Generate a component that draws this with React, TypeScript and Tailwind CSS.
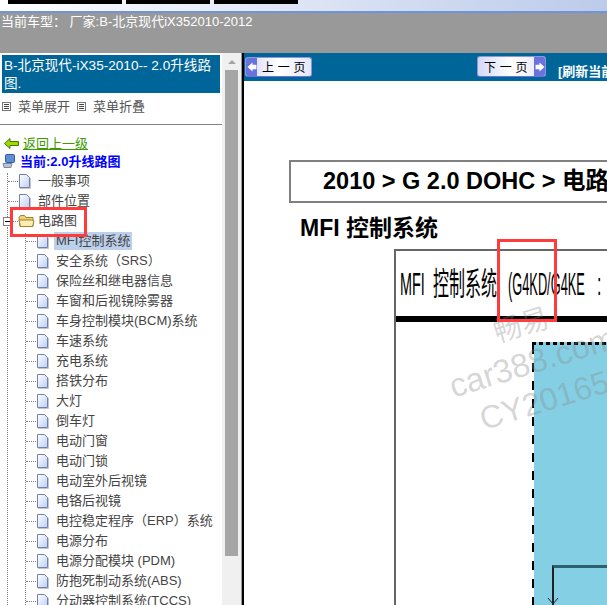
const sans = 'font-["Liberation_Sans","Noto_Sans_CJK_SC",sans-serif]';

const items = [
  'MFI控制系统', '安全系统（SRS）', '保险丝和继电器信息', '车窗和后视镜除雾器', '车身控制模块(BCM)系统',
  '车速系统', '充电系统', '搭铁分布', '大灯', '倒车灯', '电动门窗', '电动门锁', '电动室外后视镜', '电铬后视镜',
  '电控稳定程序（ERP）系统', '电源分布', '电源分配模块 (PDM)', '防抱死制动系统(ABS)', '分动器控制系统(TCCS)',
];

function PageIcon() {
  return (
    <svg width="13" height="16" viewBox="0 0 13 16" className="shrink-0">
      <defs>
        <linearGradient id="pg" x1="0" y1="0" x2="1" y2="1">
          <stop offset="0" stopColor="#ffffff" />
          <stop offset="1" stopColor="#bccff4" />
        </linearGradient>
      </defs>
      <path d="M1.5 1.5H8.5L11.5 4.5V14.5H1.5Z" fill="url(#pg)" stroke="#7480a8" />
      <path d="M2 15.5H12.5V5" fill="none" stroke="#c4c4cc" />
    </svg>
  );
}

function FolderIcon() {
  return (
    <svg width="17" height="14" viewBox="0 0 17 14" className="shrink-0">
      <path d="M1 3.5L2.5 1.5H6.5L8 3.5H15V12.5H2Z" fill="#f0d070" stroke="#9c8232" />
      <path d="M1 6H13.5L16 7L14.5 12.5H2.5Z" fill="#fbeeb0" stroke="#9c8232" />
    </svg>
  );
}

function MenuGlyph() {
  return (
    <span className="flex h-[9px] w-[9px] shrink-0 flex-col justify-center gap-px border border-[#777] px-px">
      <span className="h-px bg-[#444]" /><span className="h-px bg-[#444]" /><span className="h-px bg-[#444]" />
    </span>
  );
}

function TreeRow({ label, selected, indent }: { label: string; selected?: boolean; indent: 'top' | 'sub' }) {
  return (
    <div className={`flex h-5 items-center ${indent === 'sub' ? 'pl-[26px]' : 'pl-2'}`}>
      <span className="h-0 w-[10px] shrink-0 border-t border-dotted border-[#808080]" />
      <PageIcon />
      <span className={`ml-[5px] whitespace-nowrap px-[2px] text-[13px] leading-[18px] text-[#444] ${selected ? 'bg-[#bcd0ec]' : ''}`}>{label}</span>
    </div>
  );
}

function PagerButton({ label, dir }: { label: string; dir: 'prev' | 'next' }) {
  const arrow = (
    <span className="flex h-full w-[11px] shrink-0 items-center justify-center bg-[#6a72dc]">
      <svg width="10" height="10" viewBox="0 0 9 9">
        <path d={dir === 'prev' ? 'M5 0.5L0.5 4.5L5 8.5V6.5H8.5V2.5H5Z' : 'M4 0.5L8.5 4.5L4 8.5V6.5H0.5V2.5H4Z'} fill="#fff" />
      </svg>
    </span>
  );
  return (
    <div className={`flex items-center overflow-hidden rounded-[3px] border border-[#8e96d8] border-b-[#6a72dc] bg-gradient-to-r from-[#d4d8f8] via-[#ffffff] to-[#e4e6fc] ${dir === 'prev' ? 'h-[20px] w-[67px]' : 'h-[21px] w-[69px]'}`}>
      {dir === 'prev' && arrow}
      <span className='flex-1 text-center font-["Noto_Sans_CJK_SC",sans-serif] text-[12px] leading-none tracking-[0.5px] text-black'>{label}</span>
      {dir === 'next' && arrow}
    </div>
  );
}

export default function App() {
  return (
    <div className={`flex h-[605px] w-[607px] flex-col overflow-hidden bg-[#999999] ${sans}`}>
      {/* strip left over from the browser chrome */}
      <div className="flex h-[13px] shrink-0 gap-1 border-b-2 border-[#6f94d8] bg-gradient-to-r from-[#ffffff] to-[#bccbea] pl-2">
        <div className="h-[4px] w-[114px] bg-black" />
        <div className="h-[4px] w-[84px] bg-black" />
        <div className="h-[4px] w-[84px] bg-black" />
      </div>
      <div className="h-[40px] shrink-0 pl-[1px] pt-px text-[13px] leading-[15px] text-white">当前车型：&nbsp;厂家:B-北京现代iX352010-2012</div>

      <div className="flex min-h-0 flex-1">
        {/* left menu */}
        <div className="relative w-[222px] shrink-0 overflow-hidden bg-white">
          <div className="mx-[2px] mt-[2px] h-[38px] bg-[#006699] px-[2px] pt-[2px] text-[13.6px] leading-[18px] text-white">
            B-北京现代-iX35-2010-- 2.0升线路图.
          </div>
          <div className="flex h-[32px] items-center border-b border-[#808080] pb-[4px] pl-[2px] text-[13px] text-[#555]">
            <MenuGlyph />
            <span className="mx-[7px]">菜单展开</span>
            <MenuGlyph />
            <span className="ml-[7px]">菜单折叠</span>
          </div>

          <div className="mt-[3px] flex h-[20px] items-center pl-1 pt-[10px] text-[13px] leading-none">
            <svg width="15" height="11" viewBox="0 0 15 11" className="shrink-0">
              <path d="M0.5 5.5L6 0.5V3.5H14.5V7.5H6V10.5Z" fill="#a4d800" stroke="#3f7a00" />
            </svg>
            <span className="ml-1 text-[#3d9a00] underline">返回上一级</span>
          </div>
          <div className="mb-[2px] mt-[5px] flex h-[16px] items-center pl-[2px] text-[13px] font-bold leading-none text-[#0000ff]">
            <svg width="15" height="16" viewBox="0 0 15 16" className="shrink-0">
              <rect x="3.5" y="1.5" width="9" height="8" rx="1" fill="#5b8fd8" stroke="#33589c" />
              <path d="M1 10.5H10L9 14.5H2Z" fill="#b8c4d8" stroke="#7f8aa0" />
            </svg>
            <span className="ml-[3px]">当前:2.0升线路图</span>
          </div>

          <TreeRow indent="top" label="一般事项" />
          <TreeRow indent="top" label="部件位置" />
          <div className="flex h-5 items-center pl-[3px]">
            <span className="flex h-[9px] w-[9px] shrink-0 items-center justify-center border border-[#808080] bg-white">
              <span className="h-px w-[5px] bg-black" />
            </span>
            <span className="h-0 w-[6px] shrink-0 border-t border-dotted border-[#808080]" />
            <FolderIcon />
            <span className="ml-[3px] text-[13px] text-[#444]">电路图</span>
          </div>
          {items.map((label, i) => (
            <TreeRow key={label} indent="sub" label={label} selected={i === 0} />
          ))}

          {/* tree guide lines */}
          <div className="absolute left-[7px] top-[120px] h-[44px] border-l border-dotted border-[#808080]" />
          <div className="absolute left-[7px] top-[174px] h-[378px] border-l border-dotted border-[#808080]" />
          <div className="absolute left-[25px] top-[180px] h-[372px] border-l border-dotted border-[#808080]" />
          {/* red marker */}
          <div className="absolute left-[10px] top-[154px] h-[30px] w-[77px] border-[3px] border-[#ff3b3b]" />
        </div>

        {/* scrollbar */}
        <div className="flex w-[18px] shrink-0 flex-col bg-[#f0f0f0]">
          <div className="flex h-[17px] shrink-0 items-center justify-center pl-px">
            <span className="h-0 w-0 border-x-[4px] border-b-[4px] border-x-transparent border-b-[#a6a6a6]" />
          </div>
          <div className="ml-[3px] mr-[2px] h-[486px] bg-[#a6a6a6]" />
        </div>

        <div className="w-px shrink-0 bg-[#f0f0f0]" />
        <div className="w-px shrink-0 bg-[#999]" />
        <div className="w-[2px] shrink-0 bg-black" />

        {/* right frame */}
        <div className="relative min-w-0 flex-1 overflow-hidden bg-white">
          <div className="flex h-[28px] bg-[#006699]">
            <div className="ml-px mt-[4px]"><PagerButton dir="prev" label="上 一 页" /></div>
            <div className="ml-[165px] mt-[3px]"><PagerButton dir="next" label="下 一 页" /></div>
            <div className="ml-[12px] mt-[11px] whitespace-nowrap text-[13px] font-bold leading-[16px] text-white">[刷新当前页]</div>
          </div>

          <div className="ml-[45px] mt-[79px] flex h-[43px] w-[400px] items-center whitespace-nowrap border-2 border-[#808080] pl-[32px] text-[23.5px] font-bold text-black">
            2010 &gt; G 2.0 DOHC &gt; 电路图
          </div>
          <div className="ml-[56px] mt-[11px] whitespace-nowrap text-[23px] font-bold leading-[28px] text-black">MFI 控制系统</div>

          <div className="ml-[150px] mt-[7px] flex h-[400px] w-[400px] flex-col border-l-2 border-t-2 border-[#666]">
            <div className="flex h-[71px] shrink-0 items-center border-b-[6px] border-black pl-[4px] text-[32px] leading-none text-black">
              <span className="w-[33px] shrink-0 origin-left scale-x-[0.45] whitespace-nowrap">MFI</span>
              <span className="w-[75px] shrink-0 origin-left scale-x-50 whitespace-nowrap">控制系统</span>
              <span className="w-[89px] shrink-0 origin-left scale-x-[0.4] whitespace-nowrap">(G4KD/G4KE</span>
              <span className="shrink-0 origin-left scale-x-50 whitespace-nowrap">:</span>
            </div>
            <div className="flex flex-1 pl-[136px] pt-[20px]">
              <div className="flex flex-1 flex-col bg-[#84cfe4]">
                <div className="h-[3px] shrink-0 bg-[repeating-linear-gradient(90deg,#000_0,#000_4px,transparent_4px,transparent_7px)]" />
                <div className="flex flex-1">
                  <div className="w-[2px] shrink-0 bg-[repeating-linear-gradient(180deg,#000_0,#000_9px,#fff_9px,#fff_18px)]" />
                  <div className="flex-1 pl-[18px] pt-[220px]">
                    <div className="relative h-[80px] border-l-2 border-t-[3px] border-l-[#222] border-t-[#2f6070]">
                      <svg width="12" height="8" viewBox="0 0 12 8" className="absolute -left-[7px] top-[29px]">
                        <path d="M1 1L6 7L11 1" fill="none" stroke="#222" />
                      </svg>
                    </div>
                  </div>
                </div>
              </div>
            </div>
          </div>

          {/* watermark */}
          <div className="pointer-events-none absolute left-[203px] top-[253px] -rotate-[17deg] text-center text-[33px] leading-[40px] text-[#8a8a8a]/35">
            <div className="text-[28px] leading-[36px]">畅易</div>
            <div>car388.com</div>
            <div className="text-[32px]">CY20165</div>
          </div>
          {/* red marker */}
          <div className="absolute left-[253px] top-[186px] h-[83px] w-[60px] border-[3px] border-[#ff3b3b]" />
        </div>
      </div>
    </div>
  );
}
